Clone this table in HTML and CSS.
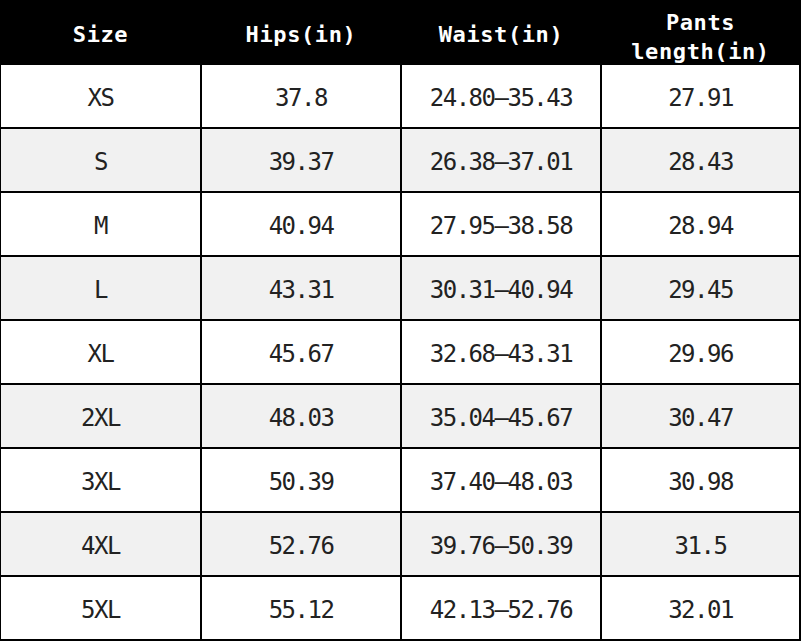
FILE: index.html
```html
<!DOCTYPE html>
<html>
<head>
<meta charset="utf-8">
<link rel="stylesheet" href="styles.css">
</head>
<body>
<div class="chart">
  <div class="cell head">Size</div>
  <div class="cell head">Hips(in)</div>
  <div class="cell head">Waist(in)</div>
  <div class="cell head two">Pants<br>length(in)</div>

  <div class="cell">XS</div><div class="cell">37.8</div><div class="cell">24.80–35.43</div><div class="cell">27.91</div>
  <div class="cell alt">S</div><div class="cell alt">39.37</div><div class="cell alt">26.38–37.01</div><div class="cell alt">28.43</div>
  <div class="cell">M</div><div class="cell">40.94</div><div class="cell">27.95–38.58</div><div class="cell">28.94</div>
  <div class="cell alt">L</div><div class="cell alt">43.31</div><div class="cell alt">30.31–40.94</div><div class="cell alt">29.45</div>
  <div class="cell">XL</div><div class="cell">45.67</div><div class="cell">32.68–43.31</div><div class="cell">29.96</div>
  <div class="cell alt">2XL</div><div class="cell alt">48.03</div><div class="cell alt">35.04–45.67</div><div class="cell alt">30.47</div>
  <div class="cell">3XL</div><div class="cell">50.39</div><div class="cell">37.40–48.03</div><div class="cell">30.98</div>
  <div class="cell alt">4XL</div><div class="cell alt">52.76</div><div class="cell alt">39.76–50.39</div><div class="cell alt">31.5</div>
  <div class="cell">5XL</div><div class="cell">55.12</div><div class="cell">42.13–52.76</div><div class="cell">32.01</div>
</div>
</body>
</html>
```

FILE: styles.css
```css
html, body {
  margin: 0;
  padding: 0;
  background: #fff;
}

.chart {
  width: 801px;
  height: 641px;
  box-sizing: border-box;
  display: grid;
  grid-template-columns: 199px 198px 198px 197px;
  grid-template-rows: 63px repeat(9, 62px);
  gap: 2px;
  padding: 0 2px 2px 1px;
  background: #000;
}

.cell {
  background: #fff;
  display: flex;
  align-items: center;
  justify-content: center;
  text-align: center;
  font-family: "DejaVu Sans Mono", "Liberation Mono", monospace;
  font-size: 24px;
  letter-spacing: -1.5px;
  color: #222;
  padding-top: 4px;
}

.cell.alt {
  background: #f1f1f1;
}

.cell.head {
  background: #000;
  color: #fff;
  font-weight: bold;
  font-size: 22px;
  letter-spacing: 0.6px;
  padding-top: 6px;
}

.cell.head.two {
  line-height: 29px;
  padding-top: 10px;
}
```
